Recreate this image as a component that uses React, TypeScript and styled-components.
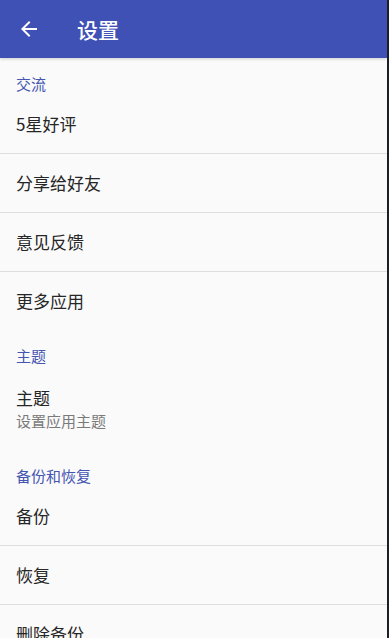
import styled, { createGlobalStyle } from "styled-components";

interface Pref {
	title: string;
	summary?: string;
};

interface Category {
	name: string;
	items: Pref[];
};

const categories: Category[] = [
	{
		name: "交流",
		items: [
			{ title: "5星好评" },
			{ title: "分享给好友" },
			{ title: "意见反馈" },
			{ title: "更多应用" },
		],
	},
	{
		name: "主题",
		items: [{ title: "主题", summary: "设置应用主题" }],
	},
	{
		name: "备份和恢复",
		items: [
			{ title: "备份" },
			{ title: "恢复" },
			{ title: "删除备份" },
		],
	},
];

const GlobalStyle = createGlobalStyle`
	html, body {
		margin: 0;
		padding: 0;
		background: #1b1f27;
		height: 100%;
		overflow: hidden;
	}
	body {
		font-family: "Noto Sans CJK SC", Roboto, "Noto Sans", sans-serif;
	}
`;

export default function App () {
	return (
		<>
			<GlobalStyle />
			<Screen>
				<Toolbar>
					<BackButton aria-label="back">
						<svg width="24" height="24" viewBox="0 0 24 24">
							<path fill="#fff" d="M20 11H7.83l5.59-5.59L12 4l-8 8 8 8 1.41-1.41L7.83 13H20v-2z" />
						</svg>
					</BackButton>
					<Title>设置</Title>
				</Toolbar>

				<List>
					{categories.map((cat) => (
						<Section key={cat.name}>
							<CategoryTitle>{cat.name}</CategoryTitle>
							{cat.items.map((item, key) => (
								<Row key={key} $tall={!!item.summary} $last={key === cat.items.length - 1}>
									<RowTitle>{item.title}</RowTitle>
									{item.summary && <Summary>{item.summary}</Summary>}
								</Row>
							))}
						</Section>
					))}
				</List>
			</Screen>
		</>
	);
};

const Screen = styled.div`
	width: 387px;
	height: 638px;
	background: #fafafa;
	display: flex;
	flex-direction: column;
	overflow: hidden;
`;

const Toolbar = styled.header`
	height: 58px;
	flex-shrink: 0;
	background: #3f51b5;
	display: flex;
	align-items: center;
	box-shadow: 0 1px 3px rgba(0, 0, 0, 0.18);
	position: relative;
	z-index: 1;
`;

const BackButton = styled.div`
	width: 24px;
	height: 24px;
	margin-left: 17px;
	display: flex;
`;

const Title = styled.h1`
	margin: 0 0 0 36px;
	font-size: 21px;
	font-weight: 500;
	color: #ffffff;
	line-height: 1;
`;

const List = styled.div`
	display: flex;
	flex-direction: column;
`;

const Section = styled.section`
	display: flex;
	flex-direction: column;
`;

const CategoryTitle = styled.div`
	height: 37px;
	padding: 16px 0 0 16px;
	box-sizing: border-box;
	font-size: 15px;
	line-height: 20px;
	color: #4555b2;
`;

const Row = styled.div<{ $tall?: boolean; $last?: boolean }>`
	height: ${props => props.$tall ? '64px' : '58px'};
	padding: ${props => props.$tall ? '19px' : '0'} 16px 0 16px;
	display: flex;
	flex-direction: column;
	justify-content: ${props => props.$tall ? 'flex-start' : 'center'};
	border-bottom: ${props => props.$last ? 'none' : '1px solid #dedede'};
`;

const RowTitle = styled.div`
	font-size: 17px;
	line-height: 24px;
	color: #262626;
`;

const Summary = styled.div`
	font-size: 15px;
	line-height: 20px;
	color: #7a7a7a;
	margin-top: 1px;
`;
